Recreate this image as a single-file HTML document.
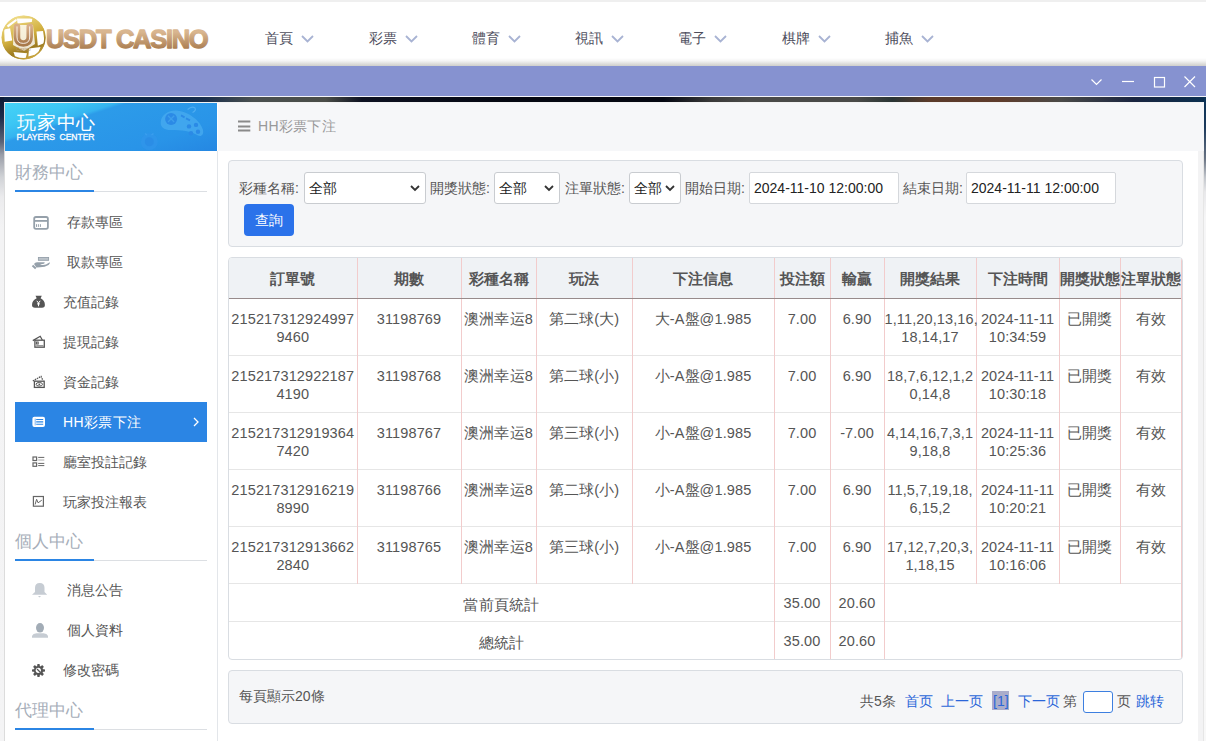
<!DOCTYPE html>
<html><head><meta charset="utf-8">
<style>
*{box-sizing:border-box;margin:0;padding:0}
html,body{width:1206px;height:741px;overflow:hidden;background:#fff;font-family:"Liberation Sans",sans-serif;font-size:14px;color:#555}
.a{position:absolute}
#top{left:0;top:0;width:1206px;height:2px;background:#efefef}
#hdr{left:0;top:2px;width:1206px;height:64px;background:#fff}
#hdrsh{left:0;top:58px;width:1206px;height:8px;background:linear-gradient(#fff 0%,#f4f4f4 35%,#dcdcda 75%,#cfcfcb 100%)}
#purple{left:0;top:66px;width:1206px;height:30px;background:#8692d0}
#wline{left:0;top:96px;width:1206px;height:1px;background:#f4f4fa}
#bgimg{left:0;top:97px;width:1206px;height:644px;background:linear-gradient(90deg,#0c2240 0%,#0b2a48 5%,#0d2848 12.5%,#1a2f4c 17%,#4a5050 21%,#4a4d48 27%,#0e1222 30%,#050812 42%,#050812 55%,#3a3a3a 59%,#4a4a48 62%,#4a4a48 71%,#2a3535 74%,#5a3a2a 77%,#5e3c2c 83%,#4a4a48 88%,#1a2540 94%,#0b3050 100%)}
#bgl{left:0;top:97px;width:4px;height:644px;background:linear-gradient(#0b1a34 0px,#1d2c4a 20px,#5c6478 45px,#9a9ea8 58px,#d0d2d6 80px,#ebebed 100px,#f3f3f4 130px,#f4f4f5 100%)}
#bgr{left:1204px;top:97px;width:2px;height:644px;background:linear-gradient(#0b3358 0px,#1c3a5c 30px,#6a7484 62px,#c0c4ca 80px,#e8e8ea 95px,#f6f6f7 120px,#f8f8f8 100%)}
#wrap{left:4px;top:102px;width:1200px;height:639px;background:#fff;border-top:1px solid #f2f2f2;border-left:1px solid #dcdcdc}
.nav{top:29px;font-size:14px;color:#4d4d5c;white-space:nowrap;line-height:18px}
.nav svg{position:absolute;left:36px;top:6px}
.wc{top:76px}
/* sidebar */
#sbh{left:5px;top:103px;width:212px;height:48px;overflow:hidden;background:linear-gradient(162deg,#45d3f7 0%,#3cc6f4 20%,#35b4f0 31%,#2c9be9 34%,#2994e8 75%,#2587e2 100%)}
#sbline{left:217px;top:151px;width:1px;height:590px;background:#e3e6ea}
.st{left:15px;font-size:17px;color:#a6aeb9;line-height:20px}
.sl{left:15px;width:192px;height:1px;background:#dcdfe3}
.sb{left:15px;width:79px;height:2px;background:#2b85e4}
.mi{left:15px;width:192px;height:40px;line-height:40px;font-size:14px;color:#555;white-space:nowrap}
.mi span{position:absolute;top:0}
.mi svg{position:absolute}
.act{background:#2b85e4;color:#fff}
/* main */
#mh{left:218px;top:103px;width:986px;height:48px;background:#f6f7f9}
#mht{left:258px;top:117px;font-size:14px;color:#999;line-height:18px;letter-spacing:0.3px}
#rstrip{left:1198px;top:151px;width:6px;height:590px;background:#f3f3f4;border-right:1px solid #e6e6e6}
#form{left:228px;top:160px;width:955px;height:87px;background:#f5f6f8;border:1px solid #d9dde2;border-radius:4px}
.lb{top:179px;font-size:14px;color:#555;line-height:18px;white-space:nowrap}
.sel{top:172px;height:32px;background:#fff;border:1px solid #c9ccd0;border-radius:3px;font-size:14px;color:#222;line-height:30px;padding-left:4px}
.sel svg{position:absolute;right:5px;top:12px}
.inp{top:172px;height:32px;width:150px;background:#fff;border:1px solid #d5d8dc;border-radius:2px;font-size:14px;color:#222;line-height:30px;padding-left:4px;white-space:nowrap}
#btn{left:244px;top:204px;width:50px;height:32px;background:#2b72ea;border-radius:4px;color:#fff;font-size:14px;line-height:32px;text-align:center}
/* table */
#tbl{left:228px;top:257px;width:955px;height:403px;border:1px solid #d9dde2;border-radius:4px;overflow:hidden;background:#fff}
table{border-collapse:collapse;table-layout:fixed;position:absolute;left:0;top:0;width:953px}
th{height:40px;background:#eff2f5;font-weight:bold;color:#555;font-size:14px;border-left:1px solid #f2cccc;border-bottom:1px solid #978b8b;text-align:center;padding:4px 0 0 0;white-space:nowrap;font-size:15px}
td{height:57px;border-left:1px solid #f2cccc;border-top:1px solid #e6e6e6;text-align:center;vertical-align:top;padding-top:11px;font-size:14.5px;color:#555;line-height:18px;letter-spacing:0.12px;white-space:nowrap}
th:first-child,td:first-child{border-left:none}
tr.s td{height:38px;padding-top:5px;vertical-align:middle}
/* pager */
#pg{left:228px;top:670px;width:955px;height:54px;background:#f5f6f8;border:1px solid #d9dde2;border-radius:4px}
.pt{top:692px;font-size:14px;line-height:18px;white-space:nowrap;color:#555}
.blue{color:#2b66d9}
</style></head><body>
<div id="top" class="a"></div>
<div id="hdr" class="a"></div>
<div id="hdrsh" class="a"></div>
<div id="purple" class="a"></div>
<div id="wline" class="a"></div>
<div id="bgimg" class="a"></div>
<div id="bgl" class="a"></div>
<div id="bgr" class="a"></div>
<div id="wrap" class="a"></div>

<!-- logo -->
<svg class="a" style="left:0;top:14px" width="48" height="48" viewBox="0 0 48 48">
 <defs>
  <linearGradient id="gold" x1="0.2" y1="0" x2="0.6" y2="1"><stop offset="0" stop-color="#f2e08e"/><stop offset=".5" stop-color="#d2b040"/><stop offset=".8" stop-color="#9c7a20"/><stop offset="1" stop-color="#c9a640"/></linearGradient>
  <linearGradient id="brz" x1="0" y1="0" x2="0" y2="1"><stop offset="0" stop-color="#d8ae88"/><stop offset="1" stop-color="#a97a4c"/></linearGradient>
 </defs>
 <circle cx="23.6" cy="23.5" r="21.8" fill="url(#gold)"/>
 <g fill="#fff">
  <path d="M16.9 4.4 L32.4 4.4 L31.8 8.1 L17.6 9.5Z"/>
  <path d="M6.8 11.5 L16.2 4.8 L16.9 6.8 L8.1 13.5Z"/>
  <path d="M4.1 15.6 L10.1 14.2 L12.2 26.4 L4.7 27.7Z"/>
  <path d="M36.5 17.6 L43.2 16.9 L44.6 29.1 L37.8 31.8Z"/>
  <path d="M13.5 37.9 L27 39.2 L25.7 44 L15.5 44Z"/>
  <path d="M29 34.5 L40.5 33.1 L37.8 39.9 L28.4 42.6Z"/>
  <path d="M14 11 L33 11 L35 30 L24 37 L13 31Z" opacity=".8"/>
 </g>
 <circle cx="23.6" cy="23.5" r="21.3" fill="none" stroke="url(#gold)" stroke-width="1.4"/>
 <path d="M17 12.8 V23 Q17 29.4 23.35 29.4 Q29.7 29.4 29.7 23 V12.8" fill="none" stroke="url(#brz)" stroke-width="6.5" stroke-linecap="round"/>
 <path d="M17 12.8 V23 Q17 29.4 23.35 29.4 Q29.7 29.4 29.7 23 V12.8" fill="none" stroke="#fff" stroke-width="1" stroke-linecap="round" opacity=".85"/>
 <text x="23.5" y="37" font-size="4.6" fill="#b8946a" text-anchor="middle" font-family="Liberation Sans">Casino</text>
</svg>
<svg class="a" style="left:40px;top:20px" width="180" height="36" viewBox="0 0 180 36"><defs><linearGradient id="lt" x1="0" y1="0" x2="0" y2="1"><stop offset=".25" stop-color="#d9b690"/><stop offset=".9" stop-color="#a87a4d"/></linearGradient></defs><text x="6" y="28" font-family="Liberation Sans" font-weight="bold" font-size="25.5" letter-spacing="-1.3" fill="url(#lt)" stroke="url(#lt)" stroke-width="1.3" stroke-linejoin="round">USDT CASINO</text></svg>

<!-- nav -->
<div class="a nav" style="left:265px">首頁<svg width="13" height="8" viewBox="0 0 13 8"><path d="M1 1 L6.5 6.5 L12 1" fill="none" stroke="#a8b3d3" stroke-width="1.8"/></svg></div>
<div class="a nav" style="left:369px">彩票<svg width="13" height="8" viewBox="0 0 13 8"><path d="M1 1 L6.5 6.5 L12 1" fill="none" stroke="#a8b3d3" stroke-width="1.8"/></svg></div>
<div class="a nav" style="left:472px">體育<svg width="13" height="8" viewBox="0 0 13 8"><path d="M1 1 L6.5 6.5 L12 1" fill="none" stroke="#a8b3d3" stroke-width="1.8"/></svg></div>
<div class="a nav" style="left:575px">視訊<svg width="13" height="8" viewBox="0 0 13 8"><path d="M1 1 L6.5 6.5 L12 1" fill="none" stroke="#a8b3d3" stroke-width="1.8"/></svg></div>
<div class="a nav" style="left:678px">電子<svg width="13" height="8" viewBox="0 0 13 8"><path d="M1 1 L6.5 6.5 L12 1" fill="none" stroke="#a8b3d3" stroke-width="1.8"/></svg></div>
<div class="a nav" style="left:782px">棋牌<svg width="13" height="8" viewBox="0 0 13 8"><path d="M1 1 L6.5 6.5 L12 1" fill="none" stroke="#a8b3d3" stroke-width="1.8"/></svg></div>
<div class="a nav" style="left:885px">捕魚<svg width="13" height="8" viewBox="0 0 13 8"><path d="M1 1 L6.5 6.5 L12 1" fill="none" stroke="#a8b3d3" stroke-width="1.8"/></svg></div>

<!-- window controls -->
<svg class="a" style="left:1086px;top:72px" width="116" height="20" viewBox="0 0 116 20">
 <path d="M5.5 7.5 L10.5 12.5 L15.5 7.5" fill="none" stroke="#fff" stroke-width="1.2"/>
 <path d="M36 9.5 H48" stroke="#fff" stroke-width="1.2"/>
 <rect x="68.5" y="5.5" width="10" height="9.5" fill="none" stroke="#fff" stroke-width="1.2"/>
 <path d="M98.5 4.5 L109 15 M109 4.5 L98.5 15" stroke="#fff" stroke-width="1.2"/>
</svg>

<!-- sidebar header -->
<div id="sbh" class="a">
 <svg class="a" style="left:0;top:0" width="212" height="48" viewBox="0 0 212 48">
  <path d="M182.6 6.5 Q187 2.5 190 5 Q191.5 7.5 187.5 9.5" fill="none" stroke="#56b2f2" stroke-width="1.2" opacity=".8"/>
  <path d="M155.7 19.9 C155.7 12 163 7 171 7.4 C183 8 196 18 198 27 C199 32 196 34 193 32.5 C186 28 176 27 166 27 C159 27 155.7 24 155.7 19.9Z" fill="#46aaef" opacity=".8"/>
  <circle cx="166.1" cy="15.9" r="6" fill="#2b8ae6"/>
  <path d="M163 12.8 L169.2 19 M169.2 12.8 L163 19" stroke="#3d9eec" stroke-width="1.3"/>
  <path d="M176 12.4 L179.6 14.4 M181 15.4 L185 17.4" stroke="#2b8ae6" stroke-width="1.8"/>
  <g fill="#2b8ae6"><circle cx="184" cy="23.4" r="2.2"/><circle cx="191" cy="21.9" r="2.2"/><circle cx="186" cy="30.3" r="2.2"/><circle cx="193" cy="28.8" r="2.2"/></g>
  <circle cx="144.3" cy="38.8" r="8.5" fill="#2f95ea" opacity=".9"/>
  <circle cx="144.3" cy="38.8" r="4.5" fill="#2a8ce6" opacity=".9"/>
  <path d="M140 30.5 L142 32 M146.5 32 L148.5 30.5" stroke="#3a9eee" stroke-width="1.5"/>
 </svg>
 <div class="a" style="left:12px;top:9px;font-size:19px;color:#fff;line-height:22px;letter-spacing:0.8px;white-space:nowrap">玩家中心</div>
 <div class="a" style="left:11.5px;top:29px;font-size:8.6px;color:#fff;line-height:11px;letter-spacing:-0.08px;white-space:nowrap;-webkit-text-stroke:0.3px #fff">PLAYERS&nbsp; CENTER</div>
</div>
<div id="sbline" class="a"></div>

<!-- sidebar sections -->
<div class="a st" style="top:163px">財務中心</div>
<div class="a sl" style="top:191px"></div><div class="a sb" style="top:190px"></div>

<div class="a mi" style="top:202px"><span style="left:52px">存款專區</span></div>
<div class="a mi" style="top:242px"><span style="left:52px">取款專區</span></div>
<div class="a mi" style="top:282px"><span style="left:48px">充值記錄</span></div>
<div class="a mi" style="top:322px"><span style="left:48px">提現記錄</span></div>
<div class="a mi" style="top:362px"><span style="left:48px">資金記錄</span></div>
<div class="a mi act" style="top:402px"><span style="left:48px;letter-spacing:0.4px">HH彩票下注</span><svg style="left:178px;top:15px" width="6" height="10" viewBox="0 0 6 10"><path d="M1 1 L5 5 L1 9" fill="none" stroke="#fff" stroke-width="1.3"/></svg></div>
<div class="a mi" style="top:442px"><span style="left:48px">廳室投註記錄</span></div>
<div class="a mi" style="top:482px"><span style="left:48px">玩家投注報表</span></div>

<div class="a st" style="top:532px">個人中心</div>
<div class="a sl" style="top:560px"></div><div class="a sb" style="top:559px"></div>
<div class="a mi" style="top:570px"><span style="left:52px">消息公告</span></div>
<div class="a mi" style="top:610px"><span style="left:52px">個人資料</span></div>
<div class="a mi" style="top:650px"><span style="left:48px">修改密碼</span></div>

<div class="a st" style="top:701px">代理中心</div>
<div class="a sl" style="top:729px"></div><div class="a sb" style="top:728px"></div>

<svg class="a" style="left:0;top:0" width="60" height="741" viewBox="0 0 60 741">
 <g fill="none" stroke="#95a0aa">
  <rect x="34.2" y="217" width="13.7" height="11.8" rx="1.8" stroke-width="1.8"/>
  <path d="M34.2 220.9 H47.9" stroke-width="1.8"/>
  <path d="M36.5 224.2 V226.9 M38.4 224.2 V226.9 M40.4 224.2 V226.9" stroke-width="1"/>
 </g>
 <g transform="translate(28,248)">
  <rect x="10.4" y="9.5" width="10.2" height="2.8" fill="#bcc3ca" stroke="#95a0aa" stroke-width="0.9"/>
  <path d="M6 16 Q7 14.2 9 14.2 H16.5 Q17.2 15 15.8 15.8 L12 16.5 Q15 17.5 18 16.6 L21.8 14.3 Q22.3 15.5 20.5 17 Q17 19.3 12 19.3 L8.5 19.5 Z" fill="#95a0aa"/>
  <path d="M4.5 17.5 L7.8 20.6" stroke="#95a0aa" stroke-width="2"/>
 </g>
 <g transform="translate(26,290)">
  <path d="M9.5 5.7 H15.8 L14.6 8.3 Q18.9 10.5 18.9 15 Q18.9 17.8 16 17.8 H9 Q6 17.8 6 15 Q6 10.5 10.7 8.3 Z" fill="#555"/>
  <path d="M10.8 10.8 L12.5 13 L14.2 10.8 M12.5 13 V16.3 M11 13.9 H14" stroke="#fff" stroke-width="1" fill="none"/>
 </g>
 <g transform="translate(26,330)" fill="none" stroke="#555" stroke-width="1.3">
  <path d="M6.8 10.6 L14.2 6.3 L16.3 10"/>
  <rect x="8.9" y="10.2" width="9.4" height="7"/>
  <path d="M10.2 15.8 H17.5" stroke="#888"/>
  <rect x="10.4" y="12" width="1.8" height="2" stroke-width="1"/>
 </g>
 <g transform="translate(26,370)" fill="none" stroke="#555" stroke-width="1.3">
  <path d="M6.8 11 L15 6.4 L17 10.5" stroke-dasharray="1.5 .8"/>
  <rect x="8.4" y="11.2" width="9.8" height="6.2"/>
  <ellipse cx="13.3" cy="14.3" rx="3.2" ry="1.8" stroke-width="1"/>
  <circle cx="13.3" cy="14.3" r=".9" fill="#555" stroke="none"/>
 </g>
 <g transform="translate(26,410)">
  <rect x="6.4" y="6.8" width="12.6" height="10.2" rx="2" fill="#fff"/>
  <path d="M10.2 9.5 H17.2 M10.2 11.9 H17.2 M10.2 14.3 H17.2" stroke="#2b85e4" stroke-width="1.1"/>
  <path d="M9.2 8.6 V15.4" stroke="#2b85e4" stroke-width=".6"/>
 </g>
 <g transform="translate(26,450)" fill="none" stroke="#666" stroke-width="1.2">
  <rect x="7" y="7" width="3.6" height="3.5"/>
  <rect x="7" y="12.9" width="3.6" height="3.4"/>
  <path d="M12.2 7.4 H18.3 M12.2 13.4 H18.3 M12.2 15.6 H18.3" stroke-width="1"/>
  <path d="M12.2 10 H18.3" stroke="#aaa" stroke-width="1"/>
 </g>
 <g transform="translate(26,490)" fill="none" stroke="#666" stroke-width="1.2">
  <rect x="7.4" y="6.5" width="10" height="9.7"/>
  <path d="M9.1 14.5 L10.6 9.3 L12.1 12.8 L15.8 10.2" stroke-width="1"/>
 </g>
 <g transform="translate(26,578)" fill="#c6ccd3">
  <path d="M6 16.8 L9 14 V9.8 Q9 4.9 13.75 4.9 Q18.5 4.9 18.5 9.8 V14 L21.2 16.8 Z"/>
  <path d="M12 18 H15 L13.5 19.6 Z"/>
 </g>
 <g transform="translate(26,618)">
  <ellipse cx="14" cy="9.8" rx="4" ry="4.8" fill="#a2acb6"/>
  <path d="M6 19.8 V17.8 Q7 15.4 10.5 15.2 H17.5 Q21 15.4 22 17.8 V19.8 Z" fill="#c6ccd3"/>
 </g>
 <g transform="translate(26,658)">
  <g fill="#555">
   <circle cx="12.5" cy="12.5" r="4.6"/>
   <rect x="11.2" y="6" width="2.6" height="13" rx=".8"/>
   <rect x="6" y="11.2" width="13" height="2.6" rx=".8"/>
   <rect x="11.2" y="6" width="2.6" height="13" rx=".8" transform="rotate(45 12.5 12.5)"/>
   <rect x="11.2" y="6" width="2.6" height="13" rx=".8" transform="rotate(-45 12.5 12.5)"/>
  </g>
  <circle cx="12.3" cy="12.3" r="2.6" fill="#fff"/>
  <path d="M11 11 L14.5 14.5" stroke="#555" stroke-width="1.3"/>
 </g>
</svg>
<!-- main -->
<div id="mh" class="a"></div>
<svg class="a" style="left:238px;top:120px" width="13" height="12" viewBox="0 0 13 12"><path d="M0 1.5H12.3M0 6.5H12.3M0 10.5H12.3" stroke="#8a8a8a" stroke-width="1.9"/></svg><div id="mht" class="a">HH彩票下注</div>
<div id="rstrip" class="a"></div>

<div id="form" class="a"></div>
<div class="a lb" style="left:239px">彩種名稱:</div>
<div class="a sel" style="left:304px;width:122px">全部<svg width="10" height="7" viewBox="0 0 10 7"><path d="M1 1 L5 5 L9 1" fill="none" stroke="#333" stroke-width="1.8"/></svg></div>
<div class="a lb" style="left:430px">開獎狀態:</div>
<div class="a sel" style="left:494px;width:66px">全部<svg width="10" height="7" viewBox="0 0 10 7"><path d="M1 1 L5 5 L9 1" fill="none" stroke="#333" stroke-width="1.8"/></svg></div>
<div class="a lb" style="left:565px">注單狀態:</div>
<div class="a sel" style="left:629px;width:52px">全部<svg width="10" height="7" viewBox="0 0 10 7"><path d="M1 1 L5 5 L9 1" fill="none" stroke="#333" stroke-width="1.8"/></svg></div>
<div class="a lb" style="left:685px">開始日期:</div>
<div class="a inp" style="left:749px">2024-11-10 12:00:00</div>
<div class="a lb" style="left:903px">結束日期:</div>
<div class="a inp" style="left:966px">2024-11-11 12:00:00</div>
<div id="btn" class="a">查詢</div>

<div id="tbl" class="a">
<table>
<colgroup><col style="width:128px"><col style="width:104px"><col style="width:75px"><col style="width:96px"><col style="width:142px"><col style="width:56px"><col style="width:54px"><col style="width:92px"><col style="width:83px"><col style="width:61px"><col style="width:62px"></colgroup>
<tr><th>訂單號</th><th>期數</th><th>彩種名稱</th><th>玩法</th><th>下注信息</th><th>投注額</th><th>輸贏</th><th>開獎結果</th><th>下注時間</th><th>開獎狀態</th><th>注單狀態</th></tr>
<tr><td>215217312924997<br>9460</td><td>31198769</td><td>澳洲幸运8</td><td>第二球(大)</td><td>大-A盤@1.985</td><td>7.00</td><td>6.90</td><td>1,11,20,13,16,<br>18,14,17</td><td>2024-11-11<br>10:34:59</td><td>已開獎</td><td>有效</td></tr>
<tr><td>215217312922187<br>4190</td><td>31198768</td><td>澳洲幸运8</td><td>第二球(小)</td><td>小-A盤@1.985</td><td>7.00</td><td>6.90</td><td>18,7,6,12,1,2<br>0,14,8</td><td>2024-11-11<br>10:30:18</td><td>已開獎</td><td>有效</td></tr>
<tr><td>215217312919364<br>7420</td><td>31198767</td><td>澳洲幸运8</td><td>第三球(小)</td><td>小-A盤@1.985</td><td>7.00</td><td>-7.00</td><td>4,14,16,7,3,1<br>9,18,8</td><td>2024-11-11<br>10:25:36</td><td>已開獎</td><td>有效</td></tr>
<tr><td>215217312916219<br>8990</td><td>31198766</td><td>澳洲幸运8</td><td>第二球(小)</td><td>小-A盤@1.985</td><td>7.00</td><td>6.90</td><td>11,5,7,19,18,<br>6,15,2</td><td>2024-11-11<br>10:20:21</td><td>已開獎</td><td>有效</td></tr>
<tr><td>215217312913662<br>2840</td><td>31198765</td><td>澳洲幸运8</td><td>第三球(小)</td><td>小-A盤@1.985</td><td>7.00</td><td>6.90</td><td>17,12,7,20,3,<br>1,18,15</td><td>2024-11-11<br>10:16:06</td><td>已開獎</td><td>有效</td></tr>
<tr class="s"><td colspan="5">當前頁統計</td><td><span style="position:relative;top:-2px">35.00</span></td><td><span style="position:relative;top:-2px">20.60</span></td><td colspan="4"></td></tr>
<tr class="s"><td colspan="5">總統計</td><td><span style="position:relative;top:-2px">35.00</span></td><td><span style="position:relative;top:-2px">20.60</span></td><td colspan="4"></td></tr>
</table>
<div class="a" style="left:952px;top:0;width:1px;height:401px;background:#f2cccc"></div>
</div>

<div id="pg" class="a"></div>
<div class="a pt" style="left:239px;top:687px">每頁顯示20條</div>
<div class="a pt" style="left:860px">共5条</div>
<div class="a pt blue" style="left:905px">首页</div>
<div class="a pt blue" style="left:941px">上一页</div>
<div class="a" style="left:992px;top:691px;width:17px;height:19px;background:#aaadca"></div>
<div class="a pt blue" style="left:993px">[1]</div>
<div class="a pt blue" style="left:1018px">下一页</div>
<div class="a pt" style="left:1063px">第</div>
<div class="a" style="left:1083px;top:691px;width:30px;height:22px;background:#fff;border:1px solid #3d7fe0;border-radius:3px"></div>
<div class="a pt" style="left:1117px">页</div>
<div class="a pt blue" style="left:1136px">跳转</div>
</body></html>
